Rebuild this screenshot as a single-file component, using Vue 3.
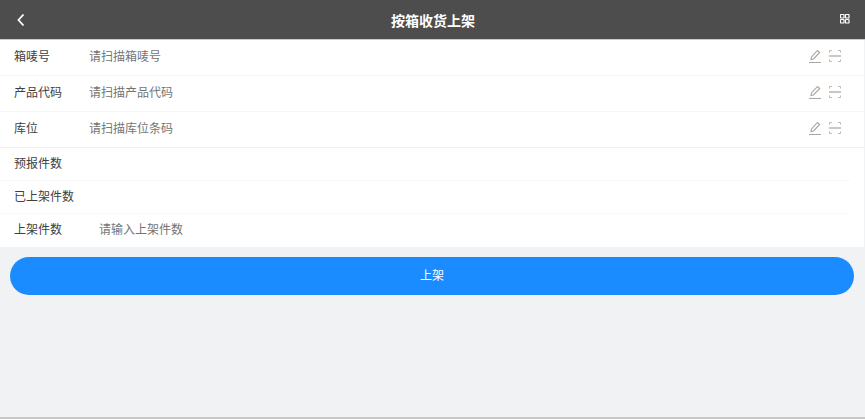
<script setup>
const scans = [
  { label: '箱唛号', hint: '请扫描箱唛号' },
  { label: '产品代码', hint: '请扫描产品代码' },
  { label: '库位', hint: '请扫描库位条码' },
]
const counts = [
  { label: '预报件数', hint: '' },
  { label: '已上架件数', hint: '' },
  { label: '上架件数', hint: '请输入上架件数' },
]
</script>

<template>
  <div class="page">
    <header class="bar">
      <svg class="back" width="10" height="14" viewBox="0 0 10 14"><path d="M7.500 1.500 2.500 7 7.500 12.500" fill="none" stroke="#fff" stroke-width="1.800"/></svg>
      <h1 class="title">按箱收货上架</h1>
      <svg class="apps" width="10" height="10" viewBox="0 0 10 10" fill="none" stroke="#fff" stroke-width="1.200">
        <rect x=".5" y=".5" width="3.500" height="3.500" rx=".6"/><rect x="5.500" y=".5" width="3.500" height="3.500" rx=".6"/>
        <rect x=".5" y="5.500" width="3.500" height="3.500" rx=".6"/><rect x="5.500" y="5.500" width="3.500" height="3.500" rx=".6"/>
      </svg>
    </header>
    <section class="scans">
      <div v-for="r in scans" :key="r.label" class="row scan">
        <span class="label">{{ r.label }}</span>
        <span class="hint">{{ r.hint }}</span>
        <svg class="ico" width="14" height="14" viewBox="0 0 14 14" fill="none" stroke="#b3a294" stroke-width="1.100"><path d="M3 10.500 3.500 8 9.500 1.500 11.700 3.500 5.500 10Z"/><path d="M1 13.500H13" stroke="#a8a8a8"/></svg>
        <svg class="ico" width="14" height="14" viewBox="0 0 14 14" fill="none" stroke="#c2bab2" stroke-width="1"><path d="M1.500 3.500V1.500H4M10 1.500H12.500V3.500M1.500 10.500V12.500H4M10 12.500H12.500V10.500"/><path d="M1 7H13" stroke="#c8c8c8" stroke-width="2"/></svg>
      </div>
    </section>
    <section class="counts">
      <div v-for="r in counts" :key="r.label" class="row count">
        <span class="label">{{ r.label }}</span>
        <span class="hint">{{ r.hint }}</span>
      </div>
    </section>
    <button class="submit">上架</button>
  </div>
</template>

<style>
html, body { margin: 0; background: #f1f2f4; }
</style>

<style scoped>
.page {
  height: 419px;
  box-sizing: border-box;
  border-bottom: 2px solid #c8c8c8;
  background: #f1f2f4;
  font: 12px/16px "Noto Sans CJK SC", "Noto Sans", sans-serif;
  color: #404040;
  overflow: hidden;
}
.bar {
  height: 39px;
  background: #4d4d4d;
  border-bottom: 1px solid #ccc;
  display: flex;
  align-items: center;
  justify-content: space-between;
  padding: 0 15px 0 16px;
}
.apps { margin-bottom: 1px; }
.title { margin: 0; font-size: 14px; font-weight: 700; color: #fff; }
.scans, .counts { background: #fff; margin-right: 1px; }
.scans { border-bottom: 1px solid #f0f0f0; }
.row { display: flex; align-items: center; box-sizing: border-box; }
.scan { height: 36px; padding: 0 22px 3px 14px; gap: 6px; border-bottom: 1px solid #f7f7f7; }
.scan:last-child { height: 35px; border-bottom: 0; }
.scan .label { width: 75px; margin-right: -6px; }
.scan .hint { flex: 1; }
.ico { margin-bottom: 1px; }
.count { height: 33px; margin-right: 14px; padding: 0 0 2px 14px; border-bottom: 1px solid #f8f8f8; }
.count:last-child { padding-bottom: 3px; border-bottom: 0; }
.count .label { width: 85px; }
.hint { color: #747474; }
.submit {
  display: block;
  width: 844px;
  height: 38px;
  margin: 10px 0 0 10px;
  padding: 0 0 2px;
  border: 0;
  border-radius: 19px;
  background: #1a8cff;
  color: #fff;
  font: inherit;
}
</style>
